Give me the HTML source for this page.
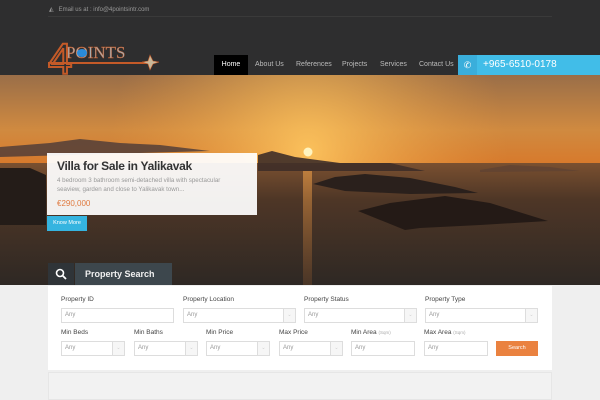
<!DOCTYPE html>
<html><head><meta charset="utf-8"><style>
*{margin:0;padding:0;box-sizing:border-box}
body{width:600px;height:400px;overflow:hidden;background:#efefef;font-family:"Liberation Sans",sans-serif;position:relative}
.hdr{position:absolute;left:0;top:0;width:600px;height:75px;background:#2e2e2f}
.abs{position:absolute}
.nav{top:55px;height:20px;font-size:7px;color:#bbb;line-height:20px}
.lbl{position:absolute;font-size:6.5px;color:#444}
.inp{position:absolute;height:15px;border:1px solid #ddd;background:#fff;font-size:6px;color:#999;line-height:13px;padding-left:3px}
.inp .ar{position:absolute;right:0;top:0;width:12px;height:13px;border-left:1px solid #ddd;background:#f6f6f6;color:#ccc;text-align:center;font-size:5px}
</style></head><body>
<div class="hdr"></div>
<div class="abs" style="left:48px;top:16px;width:504px;height:1px;background:#3a3a3a"></div>
<div class="abs" style="left:49px;top:6px;font-size:6px;color:#999">&#9709;&nbsp;&nbsp;&nbsp;Email us at : info@4pointsintr.com</div>
<svg class="abs" style="left:44px;top:32px" width="115" height="45">
<text x="4" y="42" font-family="Liberation Sans" font-size="44" fill="none" stroke="#c45a28" stroke-width="2">4</text>
<text x="22" y="26" font-family="Liberation Serif" font-size="17" fill="#aaa" stroke="#c45a28" stroke-width="0.4">POINTS</text>
<ellipse cx="38" cy="21" rx="5" ry="4" fill="#2a8ad8"/>
<line x1="4" y1="31" x2="104" y2="31" stroke="#c45a28" stroke-width="2"/>
<path d="M106 23 l3 6 l6 1 l-6 2 l-3 6 l-2-6 l-6-2 l6-1z" fill="#c9b89a" stroke="#c45a28" stroke-width=".6"/>
</svg>
<div class="abs nav" style="left:214px;width:34px;background:#000;color:#fff;text-align:center">Home</div>
<div class="abs nav" style="left:255px">About Us</div>
<div class="abs nav" style="left:296px">References</div>
<div class="abs nav" style="left:342px">Projects</div>
<div class="abs nav" style="left:380px">Services</div>
<div class="abs nav" style="left:419px">Contact Us</div>
<div class="abs" style="left:458px;top:55px;width:142px;height:20px;background:#41bde8"></div>
<div class="abs" style="left:458px;top:55px;width:19px;height:20px;background:#3aaedb;color:#fff;font-size:9px;text-align:center;line-height:20px">&#9990;</div>
<div class="abs" style="left:483px;top:55px;font-size:10px;color:#fff;line-height:20px">+965-6510-0178</div>
<svg class="abs" style="left:0;top:75px" width="600" height="210">
<defs>
<linearGradient id="sky" x1="0" y1="0" x2="0" y2="1"><stop offset="0" stop-color="#9a6e48"/><stop offset=".6" stop-color="#d08a40"/><stop offset="1" stop-color="#d8782a"/></linearGradient>
<radialGradient id="glow" cx="308" cy="77" r="200" gradientUnits="userSpaceOnUse"><stop offset="0" stop-color="#ffc860" stop-opacity=".9"/><stop offset="1" stop-color="#e89a40" stop-opacity="0"/></radialGradient>
<linearGradient id="sea" x1="0" y1="0" x2="0" y2="1"><stop offset="0" stop-color="#7a5030"/><stop offset=".3" stop-color="#4e3626"/><stop offset="1" stop-color="#2e2824"/></linearGradient>
<linearGradient id="ref" x1="0" y1="0" x2="0" y2="1"><stop offset="0" stop-color="#f0a048"/><stop offset="1" stop-color="#a06030" stop-opacity=".4"/></linearGradient>
</defs>
<rect width="600" height="92" fill="url(#sky)"/>
<rect width="600" height="92" fill="url(#glow)"/>
<rect y="88" width="600" height="122" fill="url(#sea)"/>
<rect x="303" y="96" width="9" height="114" fill="url(#ref)" opacity=".6"/>
<path d="M0 72 L50 68 L80 64 L120 68 L160 70 L210 76 L0 82z" fill="#4a3a38" opacity=".8"/>
<path d="M258 80 L272 76 L295 82 L340 88 L390 88 L425 96 L258 96z" fill="#3e2e28" opacity=".9"/>
<path d="M480 95 L510 90 L550 92 L580 96 L480 97z" fill="#5a4034" opacity=".6"/>
<path d="M0 93 L30 93 L46 100 L46 150 L0 150z" fill="#241c18"/>
<path d="M313 109 L335 102 L365 99 L410 103 L455 112 L478 118 L410 119 L345 116z" fill="#2a201c"/>
<path d="M358 136 L390 128 L445 121 L490 128 L548 146 L480 150 L420 153 L405 155z" fill="#241a16"/>
<circle cx="308" cy="77" r="4.5" fill="#fff4c0"/>
</svg>
<div class="abs" style="left:47px;top:153px;width:210px;height:62px;background:rgba(255,255,255,.93)"></div>
<div class="abs" style="left:57px;top:159px;font-size:12px;color:#333;font-weight:bold;letter-spacing:-.3px">Villa for Sale in Yalikavak</div>
<div class="abs" style="left:57px;top:176px;width:185px;font-size:6.2px;color:#999;line-height:9px">4 bedroom 3 bathroom semi-detached villa with spectacular seaview, garden and close to Yalikavak town...</div>
<div class="abs" style="left:57px;top:199px;font-size:8px;color:#e07a40">€290,000</div>
<div class="abs" style="left:47px;top:216px;width:40px;height:15px;background:#35b4e0;color:#fff;font-size:5.5px;line-height:15px;text-align:center">Know More</div>
<div class="abs" style="left:48px;top:263px;width:26px;height:22px;background:#2f3438"></div>
<svg class="abs" style="left:55px;top:268px" width="12" height="12"><circle cx="5" cy="5" r="3.5" fill="none" stroke="#fff" stroke-width="1.6"/><line x1="7.5" y1="7.5" x2="11" y2="11" stroke="#fff" stroke-width="1.8"/></svg>
<div class="abs" style="left:75px;top:263px;width:97px;height:22px;background:#3d474d;color:#f0f0f0;font-size:9px;font-weight:bold;line-height:22px;padding-left:10px">Property Search</div>
<div class="abs" style="left:48px;top:286px;width:504px;height:84px;background:#fff"></div>
<div class="abs" style="left:48px;top:372px;width:504px;height:28px;background:#f2f2f2;border:1px solid #e6e6e6"></div>
<div class="lbl" style="left:61px;top:296px">Property ID</div>
<div class="lbl" style="left:183px;top:296px">Property Location</div>
<div class="lbl" style="left:304px;top:296px">Property Status</div>
<div class="lbl" style="left:425px;top:296px">Property Type</div>
<div class="inp" style="left:61px;top:308px;width:113px">Any</div>
<div class="inp" style="left:183px;top:308px;width:113px">Any<span class="ar">&#8964;</span></div>
<div class="inp" style="left:304px;top:308px;width:113px">Any<span class="ar">&#8964;</span></div>
<div class="inp" style="left:425px;top:308px;width:113px">Any<span class="ar">&#8964;</span></div>
<div class="lbl" style="left:61px;top:329px">Min Beds</div>
<div class="lbl" style="left:134px;top:329px">Min Baths</div>
<div class="lbl" style="left:206px;top:329px">Min Price</div>
<div class="lbl" style="left:279px;top:329px">Max Price</div>
<div class="lbl" style="left:351px;top:329px">Min Area <span style="font-size:4.5px;color:#aaa">(Sqm)</span></div>
<div class="lbl" style="left:424px;top:329px">Max Area <span style="font-size:4.5px;color:#aaa">(Sqm)</span></div>
<div class="inp" style="left:61px;top:341px;width:64px">Any<span class="ar">&#8964;</span></div>
<div class="inp" style="left:134px;top:341px;width:64px">Any<span class="ar">&#8964;</span></div>
<div class="inp" style="left:206px;top:341px;width:64px">Any<span class="ar">&#8964;</span></div>
<div class="inp" style="left:279px;top:341px;width:64px">Any<span class="ar">&#8964;</span></div>
<div class="inp" style="left:351px;top:341px;width:64px">Any</div>
<div class="inp" style="left:424px;top:341px;width:64px">Any</div>
<div class="abs" style="left:496px;top:341px;width:42px;height:15px;background:#ea8240;color:#fff;font-size:5.5px;text-align:center;line-height:15px">Search</div>
</body></html>
